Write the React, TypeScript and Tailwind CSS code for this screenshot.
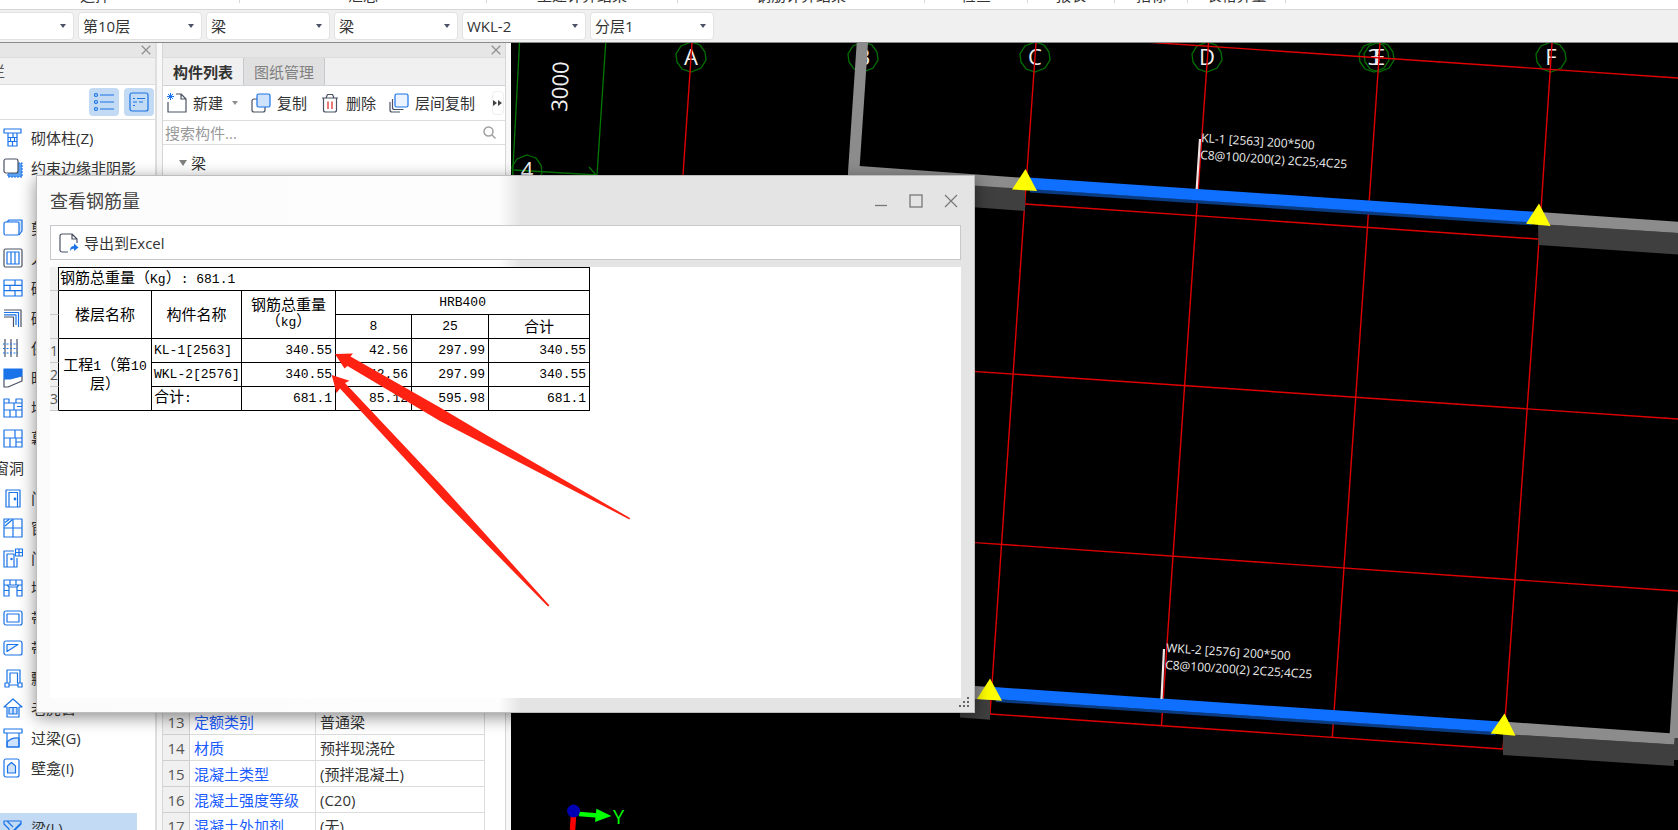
import type { ReactNode } from "react";

const BLUE = "#1a73e8";
const DARK = "#4b5263";

/* ---------- icons ---------- */

function Icon({ children, size = 20 }: { children: ReactNode; size?: number }) {
  return (
    <svg
      width={size}
      height={size}
      viewBox="0 0 20 20"
      fill="none"
      stroke={BLUE}
      strokeWidth="1.2"
      strokeLinejoin="round"
      className="shrink-0"
      aria-hidden="true"
    >
      {children}
    </svg>
  );
}

function Caret({ className = "" }: { className?: string }) {
  return (
    <svg width="6" height="4" viewBox="0 0 6 4" className={className} aria-hidden="true">
      <path d="M0 0h6L3 4z" fill="currentColor" />
    </svg>
  );
}

function Cross({ size }: { size: number }) {
  return (
    <svg width={size} height={size} viewBox="0 0 14 14" fill="none" stroke="currentColor" aria-hidden="true">
      <path d="M1 1l12 12M13 1L1 13" strokeWidth={size < 12 ? 1.7 : 1.2} />
    </svg>
  );
}

const icons: Record<string, ReactNode> = {
  column: <path d="M1 1h17v4H1zM5 5v13h9V5M5 9.500h9M5 13.500h9M10 5v4.500M7.500 9.500v4M11.500 9.500v4M9.500 13.500V18" />,
  edge: (
    <>
      <path d="M15 5h4v14H5v-4" fill="#5aa0f2" strokeDasharray="2 1" />
      <rect x="1" y="1" width="14" height="14" rx="2" fill="#fff" stroke={DARK} />
    </>
  ),
  shear: (
    <>
      <path d="M4 4l2-2h13v11l-3 4" fill="#cfe2fb" />
      <rect x="1" y="4" width="15" height="13" rx="1.500" fill="#fff" />
    </>
  ),
  defence: (
    <>
      <rect x="1" y="1" width="18" height="18" rx="1.500" stroke={DARK} />
      <path d="M4 4h12v12H4zM8 4v12M12 4v12" />
    </>
  ),
  masonry: <path d="M1 2h18v16H1zM1 7.300h18M1 12.600h18M12 2v5.300M7 7.300v5.300M12 12.600V18" />,
  rebar: (
    <>
      <path d="M1 2h17v17M1 9h9.500v10" stroke={DARK} />
      <path d="M1 4.500h14.500V19M1 6.800h12V17" />
    </>
  ),
  insulation: (
    <>
      <path d="M2 1v18M8 1v18M14 1v18" stroke={DARK} />
      <path d="M0 6h15M0 10.500h15M0 15h15" strokeDasharray="2 1.500" />
    </>
  ),
  hidden: (
    <>
      <path d="M1 11v8h4l14-6V8" stroke={DARK} />
      <path d="M1 1h18v7L7 11H1z" fill={BLUE} />
    </>
  ),
  stack: <path d="M1 1h5v4h7V1h6v18H1zM1 5h18M1 12h18M11 5v7M7 12v7M14 8.500h5M13 12v7" />,
  curtain: <path d="M1 2h18v17H1zM1 10h18M12 2v8M7 10v9M13 14h6M13 10v9" />,
  door: (
    <>
      <path d="M3 19V2h14v17zM6 19V4.500h8.500V19" />
      <circle cx="12" cy="11" r=".8" fill={BLUE} />
    </>
  ),
  window: <path d="M1 1h18v18H1zM10 1v18M1 10h18M2 8l7-6M2 4.500l4-3" />,
  doorWindow: (
    <>
      <path d="M11 3H1v16h13V10M4 19V6h7v13" />
      <path d="M12.500 1h7v7h-7zM16 1v7M12.500 4.500h7" />
      <circle cx="8.500" cy="11" r=".6" fill={BLUE} />
    </>
  ),
  opening: <path d="M1 2h18v16h-5V9H6v9H1zM1 7h18M1 12.500h5M14 12.500h5M7 2v5M13 2v5M6 9L4 7M14 9l2-2" />,
  strip: (
    <>
      <rect x="1" y="3" width="18" height="14" rx="2" />
      <rect x="4" y="6" width="12" height="8" fill="#fff" />
    </>
  ),
  stripHole: (
    <>
      <rect x="1" y="3" width="18" height="14" rx="2" />
      <path d="M4 13.500V6.500h11z" fill="#eaf3ff" />
    </>
  ),
  bay: <path d="M4 15V2h13v13M7 15V5h7.500v10M2 15h4v4H2zM15 15h4v4h-4zM6 17h9" />,
  dormer: (
    <>
      <path d="M1 9L10 1l9 8H16v10H4V9z" />
      <path d="M6 9.500h8V16H6zM10 9.500V16" fill="#cfe2fb" />
    </>
  ),
  lintel: (
    <>
      <path d="M4 14q5-5 12-4v9H4z" fill="#cfe2fb" />
      <path d="M1 1h18v4H1zM4 5v14h12V5" />
    </>
  ),
  niche: (
    <>
      <rect x="1" y="1" width="15" height="18" rx="2" />
      <path d="M4.500 15V8l4-3.500 4 3.500v7z" fill="#cfe2fb" />
    </>
  ),
  beam: <path d="M1 3h17v3l-6 6v7H6v-8L1 6zM4 3l6 6M18 5L9 14M12 12l-6 6" />,
};

/* ---------- top bars ---------- */

const ribbonGroups = [
  { label: "选择", width: "-ml-[49px] w-[289px]" },
  { label: "汇总", width: "w-[247px]" },
  { label: "土建计算结果", width: "w-[191px]" },
  { label: "钢筋计算结果", width: "w-[247px]" },
  { label: "检查", width: "w-[103px]" },
  { label: "报表", width: "w-[87px]" },
  { label: "指标", width: "w-[73px]" },
  { label: "表格算量", width: "w-[98px]" },
];

function Ribbon() {
  return (
    <div className="flex h-[10px] shrink-0 items-start overflow-hidden border-b border-[#d6d6d6] bg-white">
      {ribbonGroups.map((g) => (
        <div key={g.label} className={`flex h-[3px] shrink-0 justify-center border-r border-[#d6d6d6] ${g.width}`}>
          <span className="-mt-[15px] h-5 leading-5">{g.label}</span>
        </div>
      ))}
    </div>
  );
}

const levels = [
  { name: "单体", value: "" },
  { name: "楼层", value: "第10层" },
  { name: "构件类别", value: "梁" },
  { name: "构件类型", value: "梁" },
  { name: "构件", value: "WKL-2" },
  { name: "分层", value: "分层1" },
];

function LevelBar() {
  return (
    <div className="flex h-[33px] shrink-0 items-center gap-1 border-b border-[#8a8a8a] bg-[#f0f0f0] pb-px">
      {levels.map((l, i) => (
        <div key={l.name} className={`relative h-7 w-[124px] shrink-0 ${i === 0 ? "-ml-[50px]" : ""}`}>
          <select
            aria-label={l.name}
            className="h-full w-full appearance-none rounded border border-[#e2e2e2] bg-white pl-1 text-[15px] text-[#333]"
          >
            <option>{l.value}</option>
          </select>
          <Caret className="pointer-events-none absolute top-3 right-2 text-[#4b5263]" />
        </div>
      ))}
    </div>
  );
}

/* ---------- left navigation ---------- */

const navItems: { icon?: string; label: string; heading?: boolean; active?: boolean }[] = [
  { icon: "column", label: "砌体柱(Z)" },
  { icon: "edge", label: "约束边缘非阴影" },
  { label: "" },
  { icon: "shear", label: "剪力墙(Q)" },
  { icon: "defence", label: "人防门框墙(RF)" },
  { icon: "masonry", label: "砌体墙(Q)" },
  { icon: "rebar", label: "砌体加筋(Y)" },
  { icon: "insulation", label: "保温墙(B)" },
  { icon: "hidden", label: "暗梁(A)" },
  { icon: "stack", label: "墙垛(E)" },
  { icon: "curtain", label: "幕墙(Q)" },
  { label: "门窗洞", heading: true },
  { icon: "door", label: "门(M)" },
  { icon: "window", label: "窗(C)" },
  { icon: "doorWindow", label: "门联窗(A)" },
  { icon: "opening", label: "墙洞(D)" },
  { icon: "strip", label: "带形窗(C)" },
  { icon: "stripHole", label: "带形洞(D)" },
  { icon: "bay", label: "飘窗(X)" },
  { icon: "dormer", label: "老虎窗" },
  { icon: "lintel", label: "过梁(G)" },
  { icon: "niche", label: "壁龛(I)" },
  { label: "" },
  { icon: "beam", label: "梁(L)", active: true },
];

function PanelHeader({ label }: { label: string }) {
  return (
    <div className="flex h-[15px] shrink-0 items-center justify-end border-b border-[#dcdcdc] bg-[#e6e6e6] pr-1">
      <button aria-label={label} className="text-[#8f8f8f]">
        <Cross size={10} />
      </button>
    </div>
  );
}

function NavPanel() {
  return (
    <aside className="flex w-[157px] shrink-0 flex-col overflow-hidden border-r-2 border-[#dedede] bg-white">
      <PanelHeader label="关闭导航栏" />
      <div className="flex h-[27px] shrink-0 items-center border-b border-[#dcdcdc] bg-[#f0f0f0]">
        <span className="-ml-[40px] whitespace-nowrap text-[#555]">导航栏</span>
      </div>
      <div className="flex h-[35px] shrink-0 items-center justify-end gap-[5px] border-b border-[#dcdcdc] pr-px">
        <button aria-label="列表" className="grid h-7 w-[30px] place-items-center rounded bg-[#c2daf3]">
          <Icon>
            <circle cx="2" cy="3" r="1.500" />
            <circle cx="2" cy="10" r="1.500" />
            <circle cx="2" cy="17" r="1.500" />
            <path d="M6 3h14M6 10h14M6 17h14" />
          </Icon>
        </button>
        <button aria-label="详情" className="grid h-7 w-[30px] place-items-center rounded bg-[#c2daf3]">
          <Icon>
            <rect x="1" y="1" width="18" height="18" rx="2" />
            <path d="M4 6.500h2M8 6.500h8M4 10h4M10 10h4M4 13.500h2" />
          </Icon>
        </button>
      </div>
      <nav className="min-h-0 flex-1 overflow-hidden pt-[3px]">
        {navItems.map((item, i) =>
          item.icon ? (
            <button
              key={i}
              className={`flex h-[30px] w-[137px] items-center gap-2 pl-[3px] whitespace-nowrap ${item.active ? "bg-[#c2daf3]" : ""}`}
            >
              <Icon>{icons[item.icon]}</Icon>
              {item.label}
            </button>
          ) : (
            <div key={i} className={`flex h-[30px] items-center ${item.heading ? "-ml-[21px]" : ""}`}>
              {item.label}
            </div>
          ),
        )}
      </nav>
    </aside>
  );
}

/* ---------- component list + properties ---------- */

const properties = [
  { no: 13, name: "定额类别", value: "普通梁" },
  { no: 14, name: "材质", value: "预拌现浇砼" },
  { no: 15, name: "混凝土类型", value: "(预拌混凝土)" },
  { no: 16, name: "混凝土强度等级", value: "(C20)" },
  { no: 17, name: "混凝土外加剂", value: "(无)" },
];

function ToolButton({ icon, label }: { icon: ReactNode; label: string }) {
  return (
    <button className="flex shrink-0 items-center gap-1.5 whitespace-nowrap">
      {icon}
      {label}
    </button>
  );
}

function ComponentPanel() {
  return (
    <section className="ml-[5px] flex w-[344px] shrink-0 flex-col overflow-hidden border-x border-[#d6d6d6] bg-white">
      <PanelHeader label="关闭构件列表" />
      <div className="flex h-7 shrink-0 border-b border-[#d0d4d8] bg-[#f0f0f0]">
        <button className="w-[81px] border-r border-[#c4c8cc] font-bold">构件列表</button>
        <button className="w-[81px] border-r border-[#c4c8cc] bg-[#e0e0e0] text-[#808080]">图纸管理</button>
      </div>
      <div className="flex h-[35px] shrink-0 items-center gap-[13px] border-b border-[#dcdcdc] pl-1">
        <div className="flex items-center gap-[9px]">
          <ToolButton
            label="新建"
            icon={
              <Icon>
                <path d="M9 1h5l5 5v13H1V9M14 1v5h5" stroke={DARK} />
                <path d="M1 1l5 5M6 1L1 6M3.500 0v7M0 3.500h7" strokeWidth="1" />
              </Icon>
            }
          />
          <Caret className="text-[#8f8f8f]" />
        </div>
        <ToolButton
          label="复制"
          icon={
            <Icon>
              <path d="M6 6H3a2 2 0 0 0-2 2v9a2 2 0 0 0 2 2h9a2 2 0 0 0 2-2v-3" stroke={DARK} />
              <rect x="6" y="1" width="13" height="13" rx="1.500" fill="#cfe2fb" />
            </Icon>
          }
        />
        <ToolButton
          label="删除"
          icon={
            <Icon>
              <path d="M2 5h16M6 5l1.500-3.500h5L14 5M3.500 5v12a2 2 0 0 0 2 2h9a2 2 0 0 0 2-2V5" stroke={DARK} />
              <path d="M8 8.500V16M12 8.500V16" stroke="#e02020" />
            </Icon>
          }
        />
        <ToolButton
          label="层间复制"
          icon={
            <Icon>
              <path d="M1 9v8a2 2 0 0 0 2 2h8M3.500 6v8.500a2 2 0 0 0 2 2h9" stroke={DARK} />
              <rect x="6" y="1" width="13" height="13" rx="1.500" fill="#eaf3ff" />
            </Icon>
          }
        />
        <button aria-label="更多" className="mr-px ml-auto grid h-6 w-3 place-items-center rounded border border-[#eee] text-[#444]">
          <svg width="10" height="6" viewBox="0 0 10 6" className="shrink-0" aria-hidden="true">
            <path d="M0 0l4 3-4 3zM5 0l4 3-4 3z" fill="currentColor" />
          </svg>
        </button>
      </div>
      <div className="flex h-6 shrink-0 items-center border-b border-[#dcdcdc] pr-[9px] pl-[2px]">
        <input
          aria-label="搜索构件"
          placeholder="搜索构件..."
          className="min-w-0 flex-1 bg-transparent text-[15px] outline-none placeholder:text-[#999]"
        />
        <svg width="13" height="13" viewBox="0 0 13 13" fill="none" stroke="#a0a0a0" strokeWidth="1.5" aria-hidden="true">
          <circle cx="5.500" cy="5.500" r="4.500" />
          <path d="M9 9l3.500 3.500" />
        </svg>
      </div>
      <div className="min-h-0 flex-1 pt-2 pl-4">
        <button className="flex items-center gap-1">
          <svg width="8" height="6" viewBox="0 0 8 6" aria-hidden="true">
            <path d="M0 0h8L4 6z" fill="#808080" />
          </svg>
          梁
        </button>
      </div>
      <div className="h-[121px] shrink-0 overflow-hidden">
        <table className="w-[322px] table-fixed border-separate border-spacing-0 text-left">
          <tbody>
            {properties.map((p) => (
              <tr key={p.no} className="h-[26px]">
                <th className="w-[27px] border-r border-b border-[#cfcfcf] bg-[#f0f0f0] p-0 text-center font-normal text-[#555]">{p.no}</th>
                <td className="w-[126px] border-r border-b border-[#dcdcdc] p-0 pl-1 whitespace-nowrap text-[#1a5cff]">{p.name}</td>
                <td className="border-r border-b border-[#dcdcdc] p-0 pl-1">{p.value}</td>
              </tr>
            ))}
          </tbody>
        </table>
      </div>
    </section>
  );
}

/* ---------- 3D view ---------- */

function AxisMark({ x, y, label }: { x: number; y: number; label: string }) {
  return (
    <g>
      <polygon
        points="0,-15 9,-12 14,-5 15,3 10,11 0,15 -9,12 -14,5 -15,-3 -10,-11"
        transform={`translate(${x} ${y})`}
        fill="none"
        stroke="#007000"
        strokeWidth="1.3"
      />
      <text x={x} y={y + 8} fontSize="22" fill="#f0f0f0" textAnchor="middle">
        {label}
      </text>
    </g>
  );
}

function BeamNote({ x, y, lines }: { x: number; y: number; lines: [string, string] }) {
  return (
    <g transform={`translate(${x} ${y}) rotate(3.7)`} fontSize="12" fill="#eee">
      <text>{lines[0]}</text>
      <text y="17">{lines[1]}</text>
    </g>
  );
}

function ModelView() {
  return (
    <main className="ml-[5px] min-w-0 flex-1 bg-black">
      <svg
        className="h-full w-full"
        viewBox="511 43 1167 787"
        preserveAspectRatio="xMinYMin slice"
        fontFamily='"Open Sans", "Noto Sans", sans-serif'
      >
        {/* dimension lines */}
        <g stroke="#007a00" strokeWidth="1.3" fill="none">
          <path d="M519.500 43L512.600 175M605.700 43L597 175M589 167l8 9M514 170l83 5" />
        </g>
        <text transform="translate(567 112) rotate(-88)" fontSize="22" fill="#f0f0f0">
          3000
        </text>

        <AxisMark x={527} y={170} label="4" />
        <AxisMark x={691} y={57} label="A" />
        <AxisMark x={863} y={57} label="B" />
        <AxisMark x={1035} y={57} label="C" />
        <AxisMark x={1207} y={57} label="D" />
        <AxisMark x={1374} y={57} label="3" />
        <AxisMark x={1379} y={57} label="E" />
        <AxisMark x={1551} y={57} label="F" />

        {/* axis grid */}
        <g stroke="#e00000" strokeWidth="1.4" fill="none">
          <path d="M692 43L683 175M1036 43L1024.700 204L990 714M1208.500 43L1192.500 270L1161.500 725M1380 43L1364.500 270L1332.300 737M1552 43L1537 270L1503 749" />
          <path d="M1145 42L1678 78M1024.700 204L1538 239M975 371.500L1678 419M975 542.600L1678 591M990 714L1503 749" />
        </g>

        {/* walls */}
        <path d="M848 172L1025 188V211L848 198zM1538 224L1678 233V254.500L1538.500 245z" fill="#3f3f3f" />
        <path d="M856.700 43H868L859.700 166L1025 178V189L848 177V172z" fill="#8c8c8c" />
        <path d="M1539 212L1678 221.700V233L1538 224z" fill="#8c8c8c" />
        <path d="M960 697L990 699.500V719.700L960 717.500zM1503 734L1674 744.500V766L1503 755zM1674 738h4v22h-4z" fill="#3f3f3f" />
        <path d="M960 685L990 687V700L960 698zM1509 722L1669.700 733.300L1678 600V738h-3.500l-.5 6.500L1503 734z" fill="#8c8c8c" />

        {/* selected beams */}
        <path d="M1030 189L1532 222V225.300L1030 192.500zM996 699L1495.700 732V735.200L996 702z" fill="#0a3a80" />
        <path d="M1028 177.500L1534 211.700L1530 222.300L1028 189zM994 687L1500 721.600L1494 732L994 699z" fill="#0f70ff" />
        <path d="M1200 139L1196.700 189M1164 649L1161.500 699" stroke="#f2e4e4" strokeWidth="2.2" />
        <path
          d="M1025.500 169L1037 191L1012 189.500zM1539 203.500L1550.600 226L1526 223.700zM990 678.500L1002 700.700L977 699zM1504.500 713.500L1515.500 735.700L1490.700 733.500z"
          fill="#ffff00"
        />

        <BeamNote x={1201} y={142} lines={["KL-1 [2563] 200*500", "C8@100/200(2) 2C25;4C25"]} />
        <BeamNote x={1166} y={652} lines={["WKL-2 [2576] 200*500", "C8@100/200(2) 2C25;4C25"]} />

        {/* view axes */}
        <path d="M573.600 814L572.500 830" stroke="#ff0000" strokeWidth="5.500" />
        <path d="M579 814L598 815.500" stroke="#00ff00" strokeWidth="4.500" />
        <path d="M596.400 808.700L611.400 816L595 822z" fill="#00ff00" />
        <circle cx="573.600" cy="811" r="6.500" fill="#0000b4" />
        <text x="613" y="824" fontSize="20" fill="#00ff00">
          Y
        </text>
      </svg>
    </main>
  );
}

/* ---------- rebar dialog ---------- */

/** Latin part of a report cell, set in the narrow fixed-width face. */
function Mono({ children }: { children: ReactNode }) {
  return <span className="font-['Liberation_Mono',monospace] text-[13px]">{children}</span>;
}

const cell = "border-r border-b border-black p-0 pb-[2px]";
const num = "border-r border-b border-black p-0 pr-[3px] pb-[2px] text-right";
const rowHead = "border-r border-b border-r-black border-b-[#c8c8c8] bg-[#f0f0f0] p-0 text-left text-sm leading-4 font-normal text-[#555]";

function RebarTable() {
  return (
    <table className="w-[540px] table-fixed border-separate border-spacing-0 text-[15px] leading-4 text-black">
      <colgroup>
        <col className="w-[9px]" />
        <col className="w-[93px]" />
        <col className="w-[90px]" />
        <col className="w-[94px]" />
        <col className="w-[76px]" />
        <col className="w-[77px]" />
        <col className="w-[101px]" />
      </colgroup>
      <thead>
        <tr className="h-6">
          <td className={rowHead} />
          <th colSpan={6} className={`${cell} border-t pl-px text-left font-normal`}>
            钢筋总重量（<Mono>Kg</Mono>）<Mono>: 681.1</Mono>
          </th>
        </tr>
        <tr className="h-6">
          <td className={rowHead} />
          <th rowSpan={2} className={`${cell} font-normal`}>楼层名称</th>
          <th rowSpan={2} className={`${cell} font-normal`}>构件名称</th>
          <th rowSpan={2} className={`${cell} font-normal`}>
            钢筋总重量
            <br />
            （<Mono>kg</Mono>）
          </th>
          <th colSpan={3} className={`${cell} font-normal`}>
            <Mono>HRB400</Mono>
          </th>
        </tr>
        <tr className="h-6">
          <td className={rowHead} />
          <th className={`${cell} font-normal`}><Mono>8</Mono></th>
          <th className={`${cell} font-normal`}><Mono>25</Mono></th>
          <th className={`${cell} font-normal`}>合计</th>
        </tr>
      </thead>
      <tbody>
        <tr className="h-6">
          <th className={rowHead}>1</th>
          <td rowSpan={3} className={`${cell} text-center whitespace-nowrap`}>
            工程<Mono>1</Mono>（第<Mono>10</Mono>
            <br />
            层）
          </td>
          <td className={`${cell} pl-[2px]`}><Mono>KL-1[2563]</Mono></td>
          <td className={num}><Mono>340.55</Mono></td>
          <td className={num}><Mono>42.56</Mono></td>
          <td className={num}><Mono>297.99</Mono></td>
          <td className={num}><Mono>340.55</Mono></td>
        </tr>
        <tr className="h-6">
          <th className={rowHead}>2</th>
          <td className={`${cell} pl-[2px]`}><Mono>WKL-2[2576]</Mono></td>
          <td className={num}><Mono>340.55</Mono></td>
          <td className={num}><Mono>42.56</Mono></td>
          <td className={num}><Mono>297.99</Mono></td>
          <td className={num}><Mono>340.55</Mono></td>
        </tr>
        <tr className="h-6">
          <th className={rowHead}>3</th>
          <td className={`${cell} pl-[2px]`}>合计<Mono>:</Mono></td>
          <td className={num}><Mono>681.1</Mono></td>
          <td className={num}><Mono>85.12</Mono></td>
          <td className={num}><Mono>595.98</Mono></td>
          <td className={num}><Mono>681.1</Mono></td>
        </tr>
      </tbody>
    </table>
  );
}

function RebarDialog() {
  return (
    <div
      role="dialog"
      aria-labelledby="rebar-title"
      className="absolute top-[175px] left-[36px] flex h-[538px] w-[939px] flex-col border border-[#bdbdbd] bg-[linear-gradient(90deg,#fbfbfb_0px,#fdfdfd_462px,#e4e4e4_484px,#e4e4e4_100%)] px-[13px] pb-[14px] shadow-[0_4px_16px_rgba(0,0,0,0.45)]"
    >
      <header className="flex h-[49px] shrink-0 items-center">
        <h1 id="rebar-title" className="flex-1 text-[18px] text-[#444]">
          查看钢筋量
        </h1>
        <div className="flex items-center gap-[21px] text-[#777]">
          <button aria-label="最小化">
            <svg width="14" height="14" viewBox="0 0 14 14" aria-hidden="true">
              <path d="M1 11.500h12" stroke="currentColor" strokeWidth="1.300" />
            </svg>
          </button>
          <button aria-label="最大化">
            <svg width="14" height="14" viewBox="0 0 14 14" aria-hidden="true">
              <rect x="1" y="1" width="12" height="12" fill="none" stroke="currentColor" strokeWidth="1.300" />
            </svg>
          </button>
          <button aria-label="关闭" className="mr-[3px]">
            <Cross size={14} />
          </button>
        </div>
      </header>
      <div className="flex h-[35px] shrink-0 items-center border border-[#c6c8cc] bg-white pl-2">
        <button className="flex items-center gap-[5px]">
          <Icon>
            <path d="M9 19H3a2 2 0 0 1-2-2V3a2 2 0 0 1 2-2h10l5 5v4M13 1v5h5" stroke={DARK} />
            <path d="M11 18q0-5 4-5v-2.500l4.500 4L15 18v-2.500q-3 0-4 2.500z" fill={BLUE} stroke="none" />
          </Icon>
          导出到Excel
        </button>
      </div>
      <div className="mt-[7px] min-h-0 flex-1 overflow-hidden bg-white">
        <RebarTable />
      </div>
      <svg width="11" height="11" viewBox="0 0 11 11" className="absolute right-1 bottom-1" fill="#666" aria-hidden="true">
        <path d="M8 0h2v2H8zM4 4h2v2H4zM8 4h2v2H8zM0 8h2v2H0zM4 8h2v2H4zM8 8h2v2H8z" />
      </svg>
    </div>
  );
}

/** Red pointers drawn over the report, both ending at the total weight column. */
function Pointers() {
  return (
    <svg
      width="300"
      height="256"
      viewBox="331 352 300 256"
      fill="#ff2212"
      className="pointer-events-none absolute top-[352px] left-[331px]"
      aria-hidden="true"
    >
      <path d="M335 354L353 353.500L350.500 356.500L440 407.500L488 436L630 518L629.500 519.500L488 446L440 421L347.500 366L344.500 368.500z" />
      <path d="M331.700 375L349.500 380.700L345 383L443 487L549.500 605.500L548 606.500L443 500L340 388.500L336.500 393z" />
    </svg>
  );
}

export default function App() {
  return (
    <div className="relative flex h-screen flex-col overflow-hidden bg-[#f8f8f8] font-['Open_Sans','Noto_Sans_CJK_SC',sans-serif] text-[15px] leading-5 text-[#333]">
      <Ribbon />
      <LevelBar />
      <div className="flex min-h-0 flex-1">
        <NavPanel />
        <ComponentPanel />
        <ModelView />
      </div>
      <RebarDialog />
      <Pointers />
    </div>
  );
}
